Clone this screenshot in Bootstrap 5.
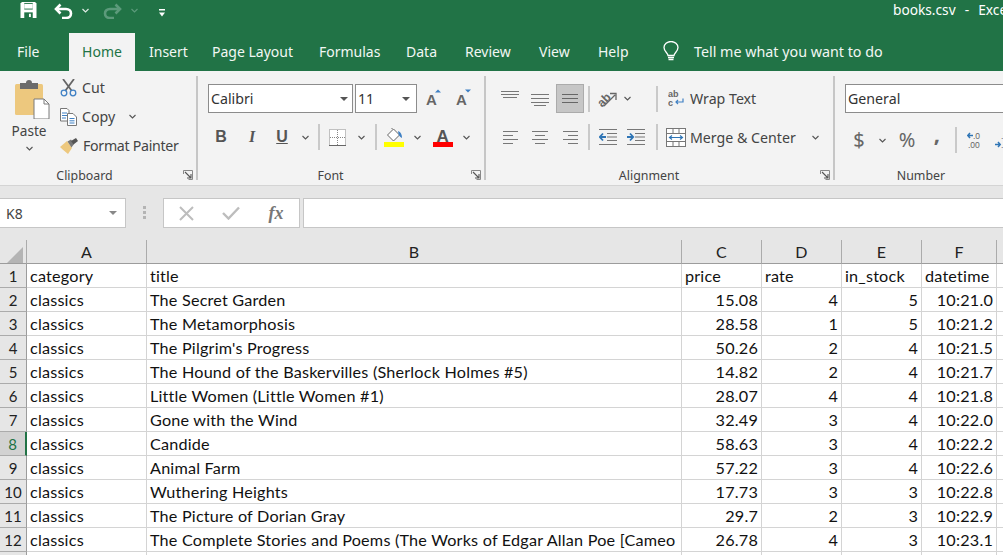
<!DOCTYPE html>
<html lang="en">
<head>
<meta charset="utf-8">
<title>books.csv - Excel</title>
<link href="https://cdn.jsdelivr.net/npm/bootstrap@5.3.0/dist/css/bootstrap.min.css" rel="stylesheet">
<style>
html,body{margin:0;width:1003px;height:555px;overflow:hidden;background:#fff}
body{font-family:"Noto Sans","Liberation Sans",sans-serif;color:#444}
svg{display:block;flex:none}
.xl-title{height:33px;background:#217346;color:#fff;font-size:13.7px}
.qat-save{margin:2px 0 0 20px}.qat-undo{margin:3px 0 0 17px}.qat-ch1{margin:8px 0 0 9px}.qat-redo{margin:3px 0 0 14px}.qat-ch2{margin:8px 0 0 9px}.qat-more{margin:9px 0 0 21px}
.xl-doc{width:110px;white-space:pre;overflow:hidden;line-height:20px;word-spacing:1px}
.xl-tabs{height:38px;background:#217346;color:#f2f7f4;font-size:14px}
.xl-tab{display:block;color:inherit;text-decoration:none;line-height:38px;height:38px}
.xl-tab.on{background:#f3f3f3;color:#217346;width:66px;text-align:center}
.t-file{margin-left:17px;width:52px}.t-ins{margin-left:14px;width:63px}.t-pl{width:107px}.t-fm{width:87px}.t-dt{width:59px}.t-rv{width:74px}.t-vw{width:59px}.t-hp{width:65px}
.t-tell{margin-left:15px;font-size:14.3px}
.xl-ribbon{height:115px;background:#f3f3f3;border-bottom:1px solid #d4d4d4;padding-top:5px;font-size:14.2px;color:#444}
.rb-group{height:104px;flex:none;border-right:2px solid #c6c6c6;display:flex;flex-direction:column}
.g-clip{width:198px}.g-font{width:288px}.g-align{width:349px}.g-num{width:172px;border-right:0}
.rb-body{height:92px;flex:none}
.rb-top{padding-top:8px;height:37px;display:grid;align-items:center;justify-items:center}
.rb-bot{margin-top:9px;height:30px;display:grid;align-items:center;justify-items:center}
.rb-lab{height:12px;line-height:12px;font-size:12.4px;display:flex;margin-top:2px;color:#444}
.rb-lab span{flex:1;text-align:center;padding-right:8px}
.g-clip .rb-lab span{padding-right:14px}
.g-num .rb-lab span{padding-right:0}
.rb-lab svg{margin:0 3px 0 0}
.clip-paste{width:60px;padding-left:15px;font-size:13.6px}
.paste-ic{margin-top:4px}
.clip-paste .pl{margin:3px 0 0 -6px;line-height:18px;width:40px;text-align:center}
.clip-paste .pc{margin:6px 0 0 11px}
.clip-rows{margin-top:-3px}
.clip-row{height:29px;display:flex;align-items:center;line-height:20px;white-space:nowrap}
.clip-row span{margin-left:5px}
.clip-row .fp{letter-spacing:-.3px;margin-left:5px}
.clip-chev{margin-left:14px}
.xl-sel{height:29px;background:#fff;border:1px solid #8c8c8c;display:flex;align-items:center;padding-left:2px;color:#333;font-size:14.2px;justify-content:space-between;justify-self:start}
.sel-font{width:145px}.sel-size{width:62px}.sel-gen{width:190px}
.sel-font svg{margin-right:4px}.sel-size svg{margin-right:6px}
.f-top{padding-left:10px;grid-template-columns:145px 2px 62px 34px 26px}
.f-bot{padding-left:10px;grid-template-columns:26px 36px 24px 22px 6px 31px 16px 14px 22px 24px 28px 18px}
.vsep{width:1.5px;height:26px;background:#c9c9c9}
.a-top,.a-bot{padding-left:10px;grid-template-columns:28px 32px 28px 10px 26px 14px 16px 14px auto}
.a-bot{grid-template-columns:28px 32px 28px 10px 28px 28px 14px auto}
.a-top>.fill1{grid-column:8}
.wrapit{justify-self:start;display:flex;align-items:center;white-space:nowrap;padding-left:4px}
.wrapit span{margin-left:5px}
.wrapit .mch{margin-left:16px}
.wrapit.merge{padding-left:2px;margin-top:2px}
.wrapit.merge span{margin-left:4px}
.tick-on{width:28px;height:29px;background:#c6c6c6;border:1px solid #ababab;display:flex;align-items:center;justify-content:center}
.n-top{padding-left:10px;grid-template-columns:190px}
.n-bot{padding-left:10px;grid-template-columns:28px 18px 32px 28px 10px 28px 28px}
.bi{font-family:"Liberation Sans",sans-serif;font-weight:700;font-size:16px;color:#555;line-height:1}
.i-i{font-family:"Liberation Serif",serif;font-style:italic}
.i-u{text-decoration:underline}
.n-sym{font-size:20px;color:#666;line-height:1}
.n-comma{margin-bottom:14px;font-weight:700;font-size:22px}
.xl-fbar{height:51px;background:#e6e6e6;padding-top:12px;color:#444}
.name-box{width:126px;height:30px;background:#fff;border:1px solid #c6c6c6;border-left:0;display:flex;align-items:center;justify-content:space-between;padding:0 8px 0 6px;font-size:14px}
.fb-dots{width:37px}
.fb-tools{width:137px;height:30px;background:#fff;border:1px solid #c6c6c6;display:grid;grid-template-columns:44px 46px 44px;align-items:center;justify-items:center}
.fx{font-family:"Liberation Serif",serif;font-style:italic;font-size:18px;color:#777;font-weight:700;line-height:1}
.fb-input{margin-left:3px;flex:1;height:30px;background:#fff;border:1px solid #c6c6c6;border-right:0}
.sheet-wrap{height:318px;overflow:hidden;background:#e6e6e6;padding-top:3px}
.sheet{table-layout:fixed;width:1097px;border-collapse:separate;border-spacing:0;margin:0;font-family:Lato,sans-serif;font-size:16.2px;letter-spacing:.2px;color:#111}
.sheet th,.sheet td{height:24px;padding:1px 3px 0;line-height:22px;border:0;border-right:1px solid #d4d4d4;border-bottom:1px solid #d4d4d4;white-space:nowrap;overflow:hidden;background:#fff;color:#111;font-weight:400;box-shadow:none}
.sheet thead th{background:#e6e6e6;text-align:center;border-right:1px solid #ababab;border-bottom:1px solid #9c9c9c;font-size:16px;color:#222;padding-top:0;line-height:23px}
.sheet tbody th{background:#e6e6e6;text-align:center;border-right:1px solid #9c9c9c;border-bottom:1px solid #ababab;padding:1px 0 0;font-size:15px;letter-spacing:0;color:#222}
.sheet tbody th.sel{background:#d2d2d2;color:#217346;border-right:2px solid #217346}
.sheet thead th.corner{padding:0 0 0 7px}
.c-r{text-align:right}
.w-h{width:27px}.w-a{width:120px}.w-b{width:535px}.w-c{width:80px}.w-f{width:75px}
</style>
</head>
<body>
<header class="xl-title d-flex align-items-start">
  <svg class="qat-save" width="17" height="16" viewBox="0 0 17 17"><path d="M0 1.5 1.500 0H15.500L17 1.500V17H0Z" fill="#fff"/><rect x="4" y="1" width="9" height="7" fill="#217346"/><rect x="4" y="2" width="9" height="5" fill="#fff"/><rect x="4" y="11" width="9" height="6" fill="#217346"/><rect x="9" y="12.500" width="2" height="3.500" fill="#fff"/></svg>
  <svg class="qat-undo" width="19" height="16" viewBox="0 0 19 16"><path d="M6.500 1.500 2 6l4.500 4.500" fill="none" stroke="#fff" stroke-width="2.600"/><path d="M3 6H12C15 6 17 8 17 10.500S15 15 12 15H8" fill="none" stroke="#fff" stroke-width="2.600"/></svg>
  <svg class="qat-ch1" width="7" height="5" viewBox="0 0 7 5"><path d="M.5 1 3.500 4 6.500 1" fill="none" stroke="#dfeae4" stroke-width="1.200"/></svg>
  <svg class="qat-redo" width="19" height="16" viewBox="0 0 19 16"><path d="M12.500 1.500 17 6l-4.500 4.500" fill="none" stroke="#5c9a7b" stroke-width="2.600"/><path d="M16 6H7C4 6 2 8 2 10.500S4 15 7 15H11" fill="none" stroke="#5c9a7b" stroke-width="2.600"/></svg>
  <svg class="qat-ch2" width="7" height="5" viewBox="0 0 7 5"><path d="M.5 1 3.500 4 6.500 1" fill="none" stroke="#5c9a7b" stroke-width="1.200"/></svg>
  <svg class="qat-more" width="6" height="8" viewBox="0 0 6 8"><rect y="0" width="6" height="1.500" fill="#fff"/><path d="M0 3.500H6L3 7.500Z" fill="#fff"/></svg>
  <div class="xl-doc ms-auto">books.csv  -  Excel</div>
</header>
<nav class="xl-tabs d-flex align-items-start">
  <a class="xl-tab t-file" href="#">File</a>
  <a class="xl-tab on" href="#">Home</a>
  <a class="xl-tab t-ins" href="#">Insert</a>
  <a class="xl-tab t-pl" href="#">Page Layout</a>
  <a class="xl-tab t-fm" href="#">Formulas</a>
  <a class="xl-tab t-dt" href="#">Data</a>
  <a class="xl-tab t-rv" href="#">Review</a>
  <a class="xl-tab t-vw" href="#">View</a>
  <a class="xl-tab t-hp" href="#">Help</a>
  <svg class="mt-2" width="16" height="21" viewBox="0 0 16 21"><path d="M5 14.500C5 12 1 10.500 1 6.500A7 6 0 0 1 15 6.500C15 10.500 11 12 11 14.500Z" fill="none" stroke="#fff" stroke-width="1.300"/><path d="M5 16.500H11M5.500 18.500H10.500" stroke="#fff" stroke-width="1.400"/></svg>
  <a class="xl-tab t-tell" href="#">Tell me what you want to do</a>
</nav>
<section class="xl-ribbon d-flex">
  <div class="rb-group g-clip">
    <div class="rb-body d-flex">
      <div class="clip-paste">
        <svg class="paste-ic" width="35" height="39" viewBox="0 0 35 39"><rect x="0" y="4" width="28" height="31" rx="1.500" fill="#edc87e"/><path d="M5 9V3H11Q11 0 14 0T17 3H23V9Z" fill="#6b6b6b"/><path d="M19 19H29L34 24V39H19Z" fill="#fff" stroke="#7a7a7a"/><path d="M29 19V24H34" fill="none" stroke="#7a7a7a"/></svg>
        <div class="pl">Paste</div>
        <svg class="pc" width="7" height="5" viewBox="0 0 7 5"><path d="M.5 1 3.500 4 6.500 1" fill="none" stroke="#555" stroke-width="1.100"/></svg>
      </div>
      <div class="clip-rows">
        <div class="clip-row"><svg width="17" height="18" viewBox="0 0 17 18"><path d="M3 0 11.500 11.500M14 0 5.500 11.500" stroke="#666" stroke-width="1.800"/><circle cx="4" cy="14" r="2.800" fill="none" stroke="#3f80c4" stroke-width="1.300"/><circle cx="13" cy="14" r="2.800" fill="none" stroke="#3f80c4" stroke-width="1.300"/></svg><span>Cut</span></div>
        <div class="clip-row"><svg width="17" height="18" viewBox="0 0 17 18"><path d="M.5.5H7L9 2.500V13H.5Z" fill="#fff" stroke="#777"/><path d="M2 5H7M2 7.500H7M2 10H6" stroke="#3f80c4"/><path d="M7.500 5.500H13L16.500 9V17.500H7.500Z" fill="#fff" stroke="#777"/><path d="M9.500 10.500H14.500M9.500 12.800H14.500M9.500 15H14.500" stroke="#3f80c4"/></svg><span>Copy</span><svg class="clip-chev" width="7" height="5" viewBox="0 0 7 5"><path d="M.5 1 3.500 4 6.500 1" fill="none" stroke="#555" stroke-width="1.100"/></svg></div>
        <div class="clip-row"><svg width="18" height="16" viewBox="0 0 18 16"><path d="M0 9 7 3 12 10 8 16Q3 12 0 9Z" fill="#edc87e"/><path d="M7.500 3.500 11 1.500 14 6 11.500 9.500Z" fill="#777"/><path d="M11 3 16 0 18 3 13.500 6.500Z" fill="#555"/></svg><span class="fp">Format Painter</span></div>
      </div>
    </div>
    <div class="rb-lab"><span>Clipboard</span><svg width="10" height="10" viewBox="0 0 10 10"><path d="M.5 4V.5H9.500V9.500H5.500" fill="none" stroke="#888"/><path d="M2 2 8 8M8 4V8H4" fill="none" stroke="#555" stroke-width="1.100"/></svg></div>
  </div>

  <div class="rb-group g-font">
    <div class="rb-body">
      <div class="rb-top f-top">
        <div class="xl-sel sel-font">Calibri<svg width="8" height="4" viewBox="0 0 8 4"><path d="M0 0H8L4 4Z" fill="#555"/></svg></div>
        <div></div>
        <div class="xl-sel sel-size">11<svg width="8" height="4" viewBox="0 0 8 4"><path d="M0 0H8L4 4Z" fill="#555"/></svg></div>
        <svg width="16" height="20" viewBox="0 0 16 20"><text x="0" y="15.500" font-family="Liberation Sans" font-size="15" fill="#666" font-weight="700">A</text><path d="M9 3.500 12 .5 15 3.500Z" fill="#3f80c4"/></svg>
        <svg width="16" height="20" viewBox="0 0 16 20"><text x="0" y="15.500" font-family="Liberation Sans" font-size="15" fill="#666" font-weight="700">A</text><path d="M9 .5H15L12 3.500Z" fill="#3f80c4"/></svg>
      </div>
      <div class="rb-bot f-bot">
        <span class="bi">B</span><span class="bi i-i">I</span><span class="bi i-u">U</span>
        <svg width="7" height="5" viewBox="0 0 7 5"><path d="M.5 1 3.500 4 6.500 1" fill="none" stroke="#555" stroke-width="1.100"/></svg>
        <div class="vsep"></div>
        <svg width="17" height="17" viewBox="0 0 17 17"><rect x=".5" y=".5" width="16" height="16" fill="#fff" stroke="#888" stroke-dasharray="1 1"/><path d="M8.500 1V16M1 8.500H16" stroke="#888" stroke-dasharray="1 1"/><path d="M0 16.500H17" stroke="#666"/></svg>
        <svg width="7" height="5" viewBox="0 0 7 5"><path d="M.5 1 3.500 4 6.500 1" fill="none" stroke="#555" stroke-width="1.100"/></svg>
        <div class="vsep"></div>
        <svg width="20" height="19" viewBox="0 0 20 19"><path d="M3.500 7 9.500 1 15.500 7 9.500 13Z" fill="#fff" stroke="#666"/><path d="M8 1 8 0" stroke="#666"/><path d="M14 3C17 4 18 7 18 10 15.500 9 14.500 7 14 3Z" fill="#3f80c4"/><rect y="14" width="20" height="5" fill="#ffff00"/></svg>
        <svg width="7" height="5" viewBox="0 0 7 5"><path d="M.5 1 3.500 4 6.500 1" fill="none" stroke="#555" stroke-width="1.100"/></svg>
        <svg width="20" height="19" viewBox="0 0 20 19"><text x="3.500" y="13.500" font-family="Liberation Sans" font-size="17" font-weight="700" fill="#555">A</text><rect y="14" width="20" height="5" fill="#ff0000"/></svg>
        <svg width="7" height="5" viewBox="0 0 7 5"><path d="M.5 1 3.500 4 6.500 1" fill="none" stroke="#555" stroke-width="1.100"/></svg>
      </div>
    </div>
    <div class="rb-lab"><span>Font</span><svg width="10" height="10" viewBox="0 0 10 10"><path d="M.5 4V.5H9.500V9.500H5.500" fill="none" stroke="#888"/><path d="M2 2 8 8M8 4V8H4" fill="none" stroke="#555" stroke-width="1.100"/></svg></div>
  </div>

  <div class="rb-group g-align">
    <div class="rb-body">
      <div class="rb-top a-top">
        <svg width="18" height="15" viewBox="0 0 18 15"><path d="M0 .5H18M0 3.500H18M2 6.500H16" stroke="#777"/></svg>
        <svg width="18" height="15" viewBox="0 0 18 15"><path d="M0 3.500H18M0 7.500H18M0 11.500H18M3 14.500H15" stroke="#777"/></svg>
        <div class="tick-on"><svg width="18" height="12" viewBox="0 0 18 12"><path d="M1 1.500H17M1 5.500H17M1 9.500H17" stroke="#666"/></svg></div>
        <div class="vsep"></div>
        <svg width="20" height="18" viewBox="0 0 20 18"><text x="0" y="14" font-family="Liberation Sans" font-size="12" fill="#666" font-weight="700" transform="rotate(-45 7 10)">ab</text><path d="M7 16 18 5M13 3.500H19V10" fill="none" stroke="#666" stroke-width="1.300"/></svg>
        <svg width="7" height="5" viewBox="0 0 7 5"><path d="M.5 1 3.500 4 6.500 1" fill="none" stroke="#555" stroke-width="1.100"/></svg>
        <div class="vsep fill1"></div>
        <div class="wrapit"><svg width="17" height="18" viewBox="0 0 17 18"><text x="0" y="7.500" font-family="Liberation Sans" font-size="9" font-weight="700" fill="#666">ab</text><text x="0" y="16.500" font-family="Liberation Sans" font-size="9" font-weight="700" fill="#666">c</text><path d="M15 9.500V13H8M10 11 8 13 10 15" fill="none" stroke="#3f80c4" stroke-width="1.200"/></svg><span>Wrap Text</span></div>
      </div>
      <div class="rb-bot a-bot">
        <svg width="15" height="13" viewBox="0 0 15 13"><path d="M0 .5H15M0 4.500H10M0 8.500H15M0 12.500H10" stroke="#777"/></svg>
        <svg width="16" height="13" viewBox="0 0 16 13"><path d="M0 .5H16M3 4.500H13M0 8.500H16M3 12.500H13" stroke="#777"/></svg>
        <svg width="15" height="13" viewBox="0 0 15 13"><path d="M0 .5H15M5 4.500H15M0 8.500H15M5 12.500H15" stroke="#777"/></svg>
        <div class="vsep"></div>
        <svg width="18" height="16" viewBox="0 0 18 16"><path d="M0 .5H18M8 4.500H18M8 8H18M8 11.500H18M0 15.500H18" stroke="#777"/><path d="M7 8H1M4 4.500 .8 8 4 11.500" fill="none" stroke="#2f75b5" stroke-width="1.800"/></svg>
        <svg width="18" height="16" viewBox="0 0 18 16"><path d="M0 .5H18M8 4.500H18M8 8H18M8 11.500H18M0 15.500H18" stroke="#777"/><path d="M0 8H6M3 4.500 6.200 8 3 11.500" fill="none" stroke="#2f75b5" stroke-width="1.800"/></svg>
        <div class="vsep"></div>
        <div class="wrapit merge"><svg width="20" height="19" viewBox="0 0 20 19"><rect x=".5" y=".5" width="19" height="18" fill="#fff" stroke="#777"/><path d="M.5 5.500H19.500M.5 13.500H19.500M7 .5V5.500M13 .5V5.500M7 13.500V18.500M13 13.500V18.500" stroke="#777"/><path d="M4 9.500H16M6 7.500 3.500 9.500 6 11.500M14 7.500 16.500 9.500 14 11.500" fill="none" stroke="#2f75b5" stroke-width="1.200"/></svg><span>Merge &amp; Center</span><svg class="mch" width="7" height="5" viewBox="0 0 7 5"><path d="M.5 1 3.500 4 6.500 1" fill="none" stroke="#555" stroke-width="1.100"/></svg></div>
      </div>
    </div>
    <div class="rb-lab"><span>Alignment</span><svg width="10" height="10" viewBox="0 0 10 10"><path d="M.5 4V.5H9.500V9.500H5.500" fill="none" stroke="#888"/><path d="M2 2 8 8M8 4V8H4" fill="none" stroke="#555" stroke-width="1.100"/></svg></div>
  </div>

  <div class="rb-group g-num">
    <div class="rb-body">
      <div class="rb-top n-top"><div class="xl-sel sel-gen">General</div></div>
      <div class="rb-bot n-bot">
        <span class="n-sym">$</span>
        <svg width="7" height="5" viewBox="0 0 7 5"><path d="M.5 1 3.500 4 6.500 1" fill="none" stroke="#555" stroke-width="1.100"/></svg>
        <span class="n-sym">%</span>
        <span class="n-sym n-comma">,</span>
        <div class="vsep"></div>
        <svg width="16" height="17" viewBox="0 0 16 17"><text x="6" y="7" font-family="Liberation Sans" font-size="8.500" fill="#666">.0</text><text x="1" y="16" font-family="Liberation Sans" font-size="8.500" fill="#666">.00</text><path d="M6 3.500H1M3 1 .8 3.500 3 6" fill="none" stroke="#2f75b5" stroke-width="1.500"/></svg>
        <svg width="16" height="17" viewBox="0 0 16 17"><text x="6" y="7" font-family="Liberation Sans" font-size="8.500" fill="#666">.00</text><text x="6" y="16" font-family="Liberation Sans" font-size="8.500" fill="#666">.0</text><path d="M0 12.500H5M3 10 5.200 12.500 3 15" fill="none" stroke="#2f75b5" stroke-width="1.500"/></svg>
      </div>
    </div>
    <div class="rb-lab"><span>Number</span></div>
  </div>
</section>

<section class="xl-fbar d-flex align-items-start">
  <div class="name-box">K8<svg width="8" height="4" viewBox="0 0 8 4"><path d="M0 0H8L4 4Z" fill="#888"/></svg></div>
  <div class="fb-dots d-flex justify-content-center pt-2"><svg width="3" height="13" viewBox="0 0 3 13"><path d="M0 0h3v3H0zM0 5h3v3H0zM0 10h3v3H0z" fill="#b4b4b4"/></svg></div>
  <div class="fb-tools">
    <svg width="15" height="15" viewBox="0 0 15 15"><path d="M1 1 14 14M14 1 1 14" stroke="#bdbdbd" stroke-width="2"/></svg>
    <svg width="18" height="14" viewBox="0 0 18 14"><path d="M1 7 6.500 12.500 17 1.500" fill="none" stroke="#bdbdbd" stroke-width="2.400"/></svg>
    <span class="fx">fx</span>
  </div>
  <div class="fb-input"></div>
</section>

<div class="sheet-wrap">
<table class="table sheet">
  <colgroup><col class="w-h"><col class="w-a"><col class="w-b"><col class="w-c"><col class="w-c"><col class="w-c"><col class="w-f"><col></colgroup>
  <thead><tr>
    <th class="corner"><svg width="16" height="16" viewBox="0 0 16 16"><path d="M16 0V16H0Z" fill="#b4b4b4"/></svg></th>
    <th>A</th><th>B</th><th>C</th><th>D</th><th>E</th><th>F</th><th></th>
  </tr></thead>
  <tbody>
    <tr><th>1</th><td>category</td><td>title</td><td>price</td><td>rate</td><td>in_stock</td><td>datetime</td><td></td></tr>
    <tr><th>2</th><td>classics</td><td>The Secret Garden</td><td class="c-r">15.08</td><td class="c-r">4</td><td class="c-r">5</td><td class="c-r">10:21.0</td><td></td></tr>
    <tr><th>3</th><td>classics</td><td>The Metamorphosis</td><td class="c-r">28.58</td><td class="c-r">1</td><td class="c-r">5</td><td class="c-r">10:21.2</td><td></td></tr>
    <tr><th>4</th><td>classics</td><td>The Pilgrim's Progress</td><td class="c-r">50.26</td><td class="c-r">2</td><td class="c-r">4</td><td class="c-r">10:21.5</td><td></td></tr>
    <tr><th>5</th><td>classics</td><td>The Hound of the Baskervilles (Sherlock Holmes #5)</td><td class="c-r">14.82</td><td class="c-r">2</td><td class="c-r">4</td><td class="c-r">10:21.7</td><td></td></tr>
    <tr><th>6</th><td>classics</td><td>Little Women (Little Women #1)</td><td class="c-r">28.07</td><td class="c-r">4</td><td class="c-r">4</td><td class="c-r">10:21.8</td><td></td></tr>
    <tr><th>7</th><td>classics</td><td>Gone with the Wind</td><td class="c-r">32.49</td><td class="c-r">3</td><td class="c-r">4</td><td class="c-r">10:22.0</td><td></td></tr>
    <tr><th class="sel">8</th><td>classics</td><td>Candide</td><td class="c-r">58.63</td><td class="c-r">3</td><td class="c-r">4</td><td class="c-r">10:22.2</td><td></td></tr>
    <tr><th>9</th><td>classics</td><td>Animal Farm</td><td class="c-r">57.22</td><td class="c-r">3</td><td class="c-r">4</td><td class="c-r">10:22.6</td><td></td></tr>
    <tr><th>10</th><td>classics</td><td>Wuthering Heights</td><td class="c-r">17.73</td><td class="c-r">3</td><td class="c-r">3</td><td class="c-r">10:22.8</td><td></td></tr>
    <tr><th>11</th><td>classics</td><td>The Picture of Dorian Gray</td><td class="c-r">29.7</td><td class="c-r">2</td><td class="c-r">3</td><td class="c-r">10:22.9</td><td></td></tr>
    <tr><th>12</th><td>classics</td><td>The Complete Stories and Poems (The Works of Edgar Allan Poe [Cameo</td><td class="c-r">26.78</td><td class="c-r">4</td><td class="c-r">3</td><td class="c-r">10:23.1</td><td></td></tr>
    <tr><th>13</th><td></td><td></td><td></td><td></td><td></td><td></td><td></td></tr>
  </tbody>
</table>
</div>
<script src="https://cdn.jsdelivr.net/npm/bootstrap@5.3.0/dist/js/bootstrap.bundle.min.js"></script>
</body>
</html>
